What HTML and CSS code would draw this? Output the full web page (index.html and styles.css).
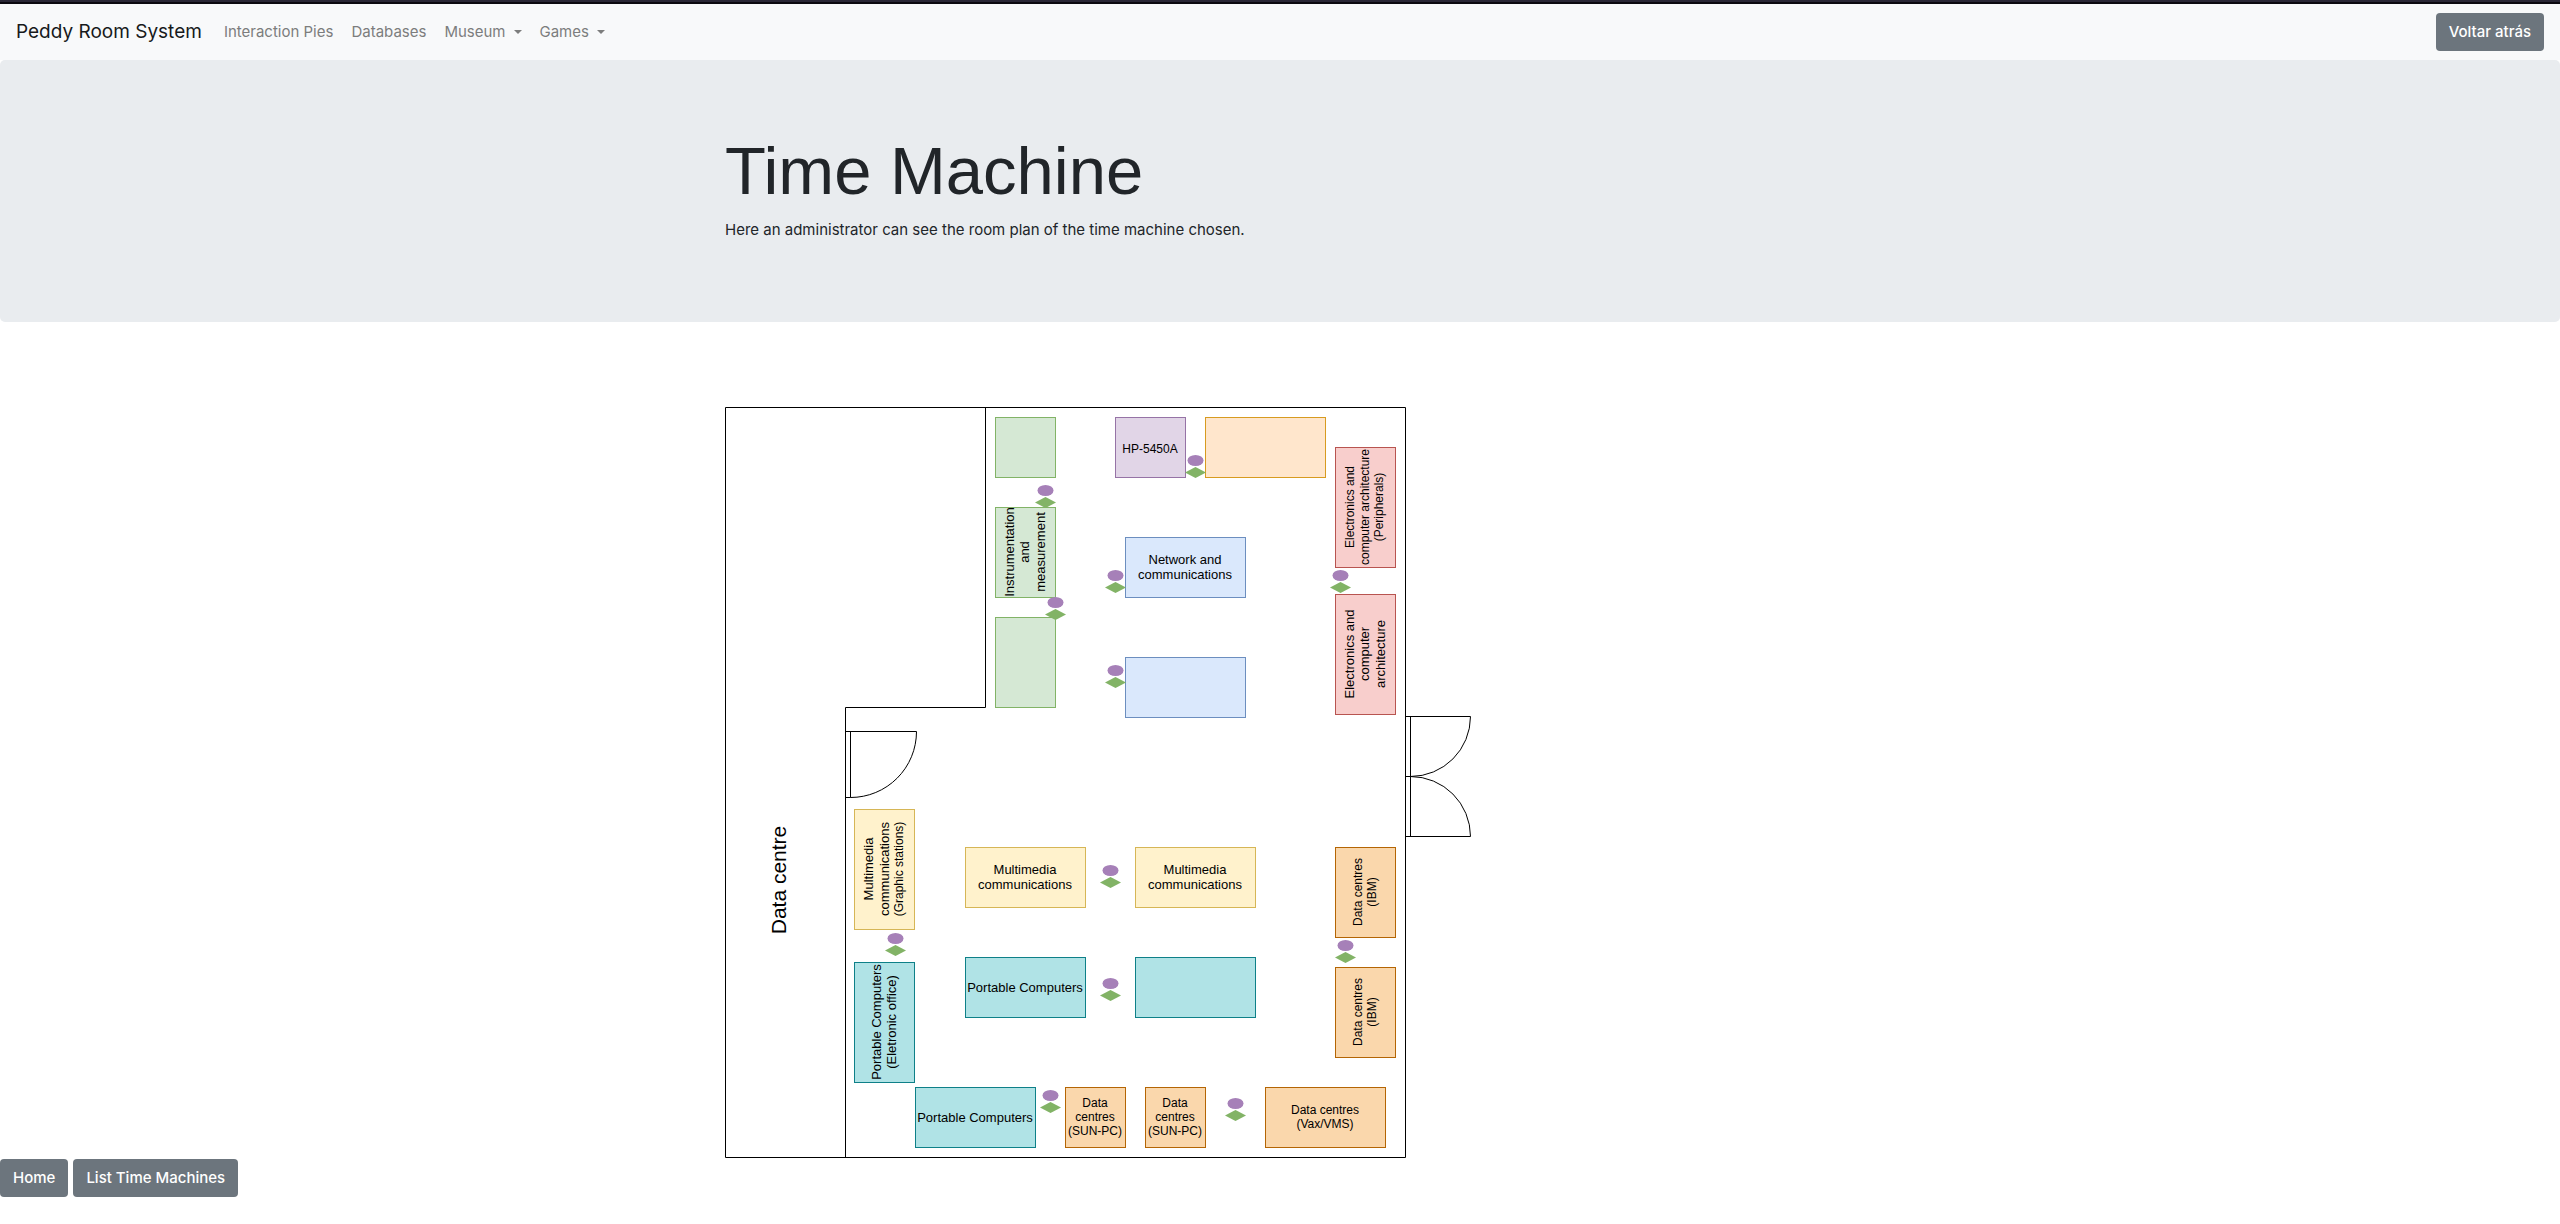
FILE: index.html
```html
<!DOCTYPE html>
<html lang="en">
<head>
<meta charset="utf-8">
<meta name="viewport" content="width=device-width, initial-scale=1">
<title>Time Machine - Peddy Room System</title>
<link rel="stylesheet" href="styles.css">
</head>
<body>
<header class="navbar">
  <a class="brand" href="#">Peddy Room System</a>
  <nav class="nav">
    <a class="nav-link" href="#">Interaction Pies</a>
    <a class="nav-link" href="#">Databases</a>
    <a class="nav-link dropdown" href="#">Museum</a>
    <a class="nav-link dropdown" href="#">Games</a>
  </nav>
  <button class="btn" type="button">Voltar atrás</button>
</header>
<main>
  <section class="jumbotron">
    <div class="container">
      <h1 class="title">Time Machine</h1>
      <p class="lead">Here an administrator can see the room plan of the time machine chosen.</p>
    </div>
  </section>
  <div class="container">
    <svg class="plan" width="746" height="752" viewBox="0 0 746 752" role="img" aria-label="Room plan">
      <defs>
        <g id="marker">
          <ellipse class="spot" cx="0" cy="-12" rx="8" ry="5.5"/>
          <path class="point" d="M-10.5 0L0-5.5 10.5 0 0 5.5z"/>
        </g>
      </defs>

      <!-- walls and doors -->
      <g class="wall">
        <path d="M.5.5h680v750H.5z"/>
        <path d="M260.5.5v300h-140v450"/>
        <path d="M120.5 324.5h71a66 66 0 0 1-66 66h-5M125.5 324.5v66"/>
        <path d="M680.5 309.5h65a60 60 0 0 1-60 60h-5M680.5 429.5h65a60 60 0 0 0-60-60M685.5 309.5v120"/>
      </g>

      <!-- tables -->
      <g class="green">
        <rect x="270.5" y="10.5" width="60" height="60"/>
        <rect x="270.5" y="100.5" width="60" height="90"/>
        <rect x="270.5" y="210.5" width="60" height="90"/>
      </g>
      <rect class="purple" x="390.5" y="10.5" width="70" height="60"/>
      <rect class="orange" x="480.5" y="10.5" width="120" height="60"/>
      <g class="red">
        <rect x="610.5" y="40.5" width="60" height="120"/>
        <rect x="610.5" y="187.5" width="60" height="120"/>
      </g>
      <g class="blue">
        <rect x="400.5" y="130.5" width="120" height="60"/>
        <rect x="400.5" y="250.5" width="120" height="60"/>
      </g>
      <g class="yellow">
        <rect x="129.5" y="402.5" width="60" height="120"/>
        <rect x="240.5" y="440.5" width="120" height="60"/>
        <rect x="410.5" y="440.5" width="120" height="60"/>
      </g>
      <g class="teal">
        <rect x="129.5" y="555.5" width="60" height="120"/>
        <rect x="240.5" y="550.5" width="120" height="60"/>
        <rect x="410.5" y="550.5" width="120" height="60"/>
        <rect x="190.5" y="680.5" width="120" height="60"/>
      </g>
      <g class="brown">
        <rect x="610.5" y="440.5" width="60" height="90"/>
        <rect x="610.5" y="560.5" width="60" height="90"/>
        <rect x="340.5" y="680.5" width="60" height="60"/>
        <rect x="420.5" y="680.5" width="60" height="60"/>
        <rect x="540.5" y="680.5" width="120" height="60"/>
      </g>

      <!-- markers -->
      <use href="#marker" x="320.5" y="95.5"/>
      <use href="#marker" x="330.5" y="207.5"/>
      <use href="#marker" x="470.5" y="65.5"/>
      <use href="#marker" x="390.5" y="180.5"/>
      <use href="#marker" x="390.5" y="275.5"/>
      <use href="#marker" x="615.5" y="180.5"/>
      <use href="#marker" x="170.5" y="543.5"/>
      <use href="#marker" x="385.5" y="475.5"/>
      <use href="#marker" x="620.5" y="550.5"/>
      <use href="#marker" x="385.5" y="588.5"/>
      <use href="#marker" x="325.5" y="700.5"/>
      <use href="#marker" x="510.5" y="708.5"/>

      <!-- labels -->
      <g class="label">
        <text class="small" x="425" y="46">HP-5450A</text>
        <text x="460" y="157">Network and<tspan x="460" dy="15">communications</tspan></text>
        <text x="300" y="467">Multimedia<tspan x="300" dy="15">communications</tspan></text>
        <text x="470" y="467">Multimedia<tspan x="470" dy="15">communications</tspan></text>
        <text x="300" y="585">Portable Computers</text>
        <text x="250" y="715">Portable Computers</text>
        <text class="small" x="370" y="700">Data<tspan x="370" dy="14">centres</tspan><tspan x="370" dy="14">(SUN-PC)</tspan></text>
        <text class="small" x="450" y="700">Data<tspan x="450" dy="14">centres</tspan><tspan x="450" dy="14">(SUN-PC)</tspan></text>
        <text class="small" x="600" y="707">Data centres<tspan x="600" dy="14">(Vax/VMS)</tspan></text>
      </g>
      <g class="label">
        <text class="large" transform="translate(61 473) rotate(-90)">Data centre</text>
        <text transform="translate(289 145) rotate(-90)">Instrumentation<tspan x="0" dy="15">and</tspan><tspan x="0" dy="16">measurement</tspan></text>
        <text class="small" transform="translate(629 100) rotate(-90)">Electronics and<tspan x="0" dy="15">computer architecture</tspan><tspan x="0" dy="14">(Peripherals)</tspan></text>
        <text transform="translate(629 247) rotate(-90)">Electronics and<tspan x="0" dy="15">computer</tspan><tspan x="0" dy="16">architecture</tspan></text>
        <text transform="translate(148 462) rotate(-90)">Multimedia<tspan x="0" dy="16">communications</tspan><tspan class="small" x="0" dy="14">(Graphic stations)</tspan></text>
        <text transform="translate(156 615) rotate(-90)">Portable Computers<tspan x="0" dy="15">(Eletronic office)</tspan></text>
        <text class="small" transform="translate(637 485) rotate(-90)">Data centres<tspan x="0" dy="14">(IBM)</tspan></text>
        <text class="small" transform="translate(637 605) rotate(-90)">Data centres<tspan x="0" dy="14">(IBM)</tspan></text>
      </g>
    </svg>
  </div>
</main>
<footer class="actions">
  <button class="btn" type="button">Home</button>
  <button class="btn" type="button">List Time Machines</button>
</footer>
</body>
</html>
```
FILE: styles.css
```css
* {
  box-sizing: border-box;
}

body {
  margin: 0;
  border-top: 2px solid #2a2735;
  background: #fff;
  color: #212529;
  font-family: Inter, "Liberation Sans", sans-serif;
  font-size: 15px;
  line-height: 24px;
}

a {
  text-decoration: none;
}

.navbar {
  display: flex;
  align-items: center;
  padding: 8px 16px;
  border-top: 2px solid #0c0a10;
  background: #f8f9fa;
}

.brand {
  margin-right: 14px;
  color: #17191b;
  font-size: 19px;
  line-height: 30px;
}

.nav {
  display: flex;
  flex: 1;
  gap: 2px;
}

.nav-link {
  padding: 8px;
  color: #7c7d7d;
}

.dropdown::after {
  content: "";
  display: inline-block;
  margin-left: 8px;
  border: 4px solid transparent;
  border-top-color: currentColor;
  border-bottom: 0;
  vertical-align: 3px;
}

.btn {
  padding: 7px 13px;
  border: 0;
  border-radius: 4px;
  background: #6c757d;
  color: #fff;
  font: inherit;
  font-weight: 500;
}

.jumbotron {
  margin-bottom: 85px;
  padding: 64px 32px;
  border-radius: 5px;
  background: #e9ecef;
}

.container {
  max-width: 1140px;
  margin: 0 auto;
  padding: 0 15px;
}

.title {
  margin: 0;
  font-family: "Liberation Sans", sans-serif;
  font-size: 67px;
  font-weight: 400;
  line-height: 94px;
}

.lead {
  margin: 0 0 16px;
}

.plan {
  display: block;
  max-width: 100%;
}

.wall {
  fill: none;
  stroke: #000;
}

.green { fill: #d5e8d4; stroke: #82b366; }
.purple { fill: #e1d5e7; stroke: #9673a6; }
.orange { fill: #ffe6cc; stroke: #d79b20; }
.red { fill: #f8cecc; stroke: #b85450; }
.blue { fill: #dae8fc; stroke: #6c8ebf; }
.yellow { fill: #fff2cc; stroke: #d6b656; }
.teal { fill: #b0e3e6; stroke: #0e8088; }
.brown { fill: #fad7ac; stroke: #b46504; }
.spot { fill: #a680b8; }
.point { fill: #82b366; }

.label {
  fill: #000;
  font-family: "Liberation Sans", sans-serif;
  font-size: 13px;
  text-anchor: middle;
}

.small { font-size: 12px; }
.large { font-size: 21px; }

.actions {
  display: flex;
  gap: 5px;
}
```
